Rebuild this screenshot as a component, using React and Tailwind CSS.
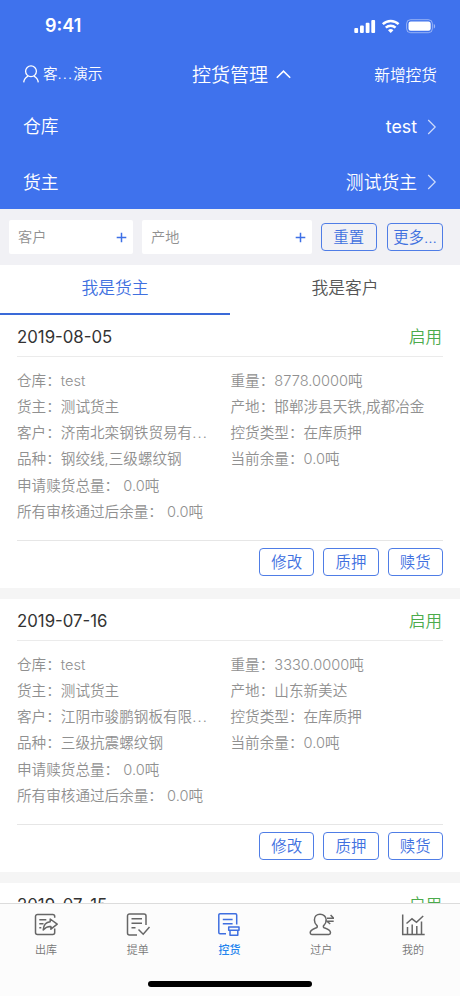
import React, { useState } from 'react'

const cards = [
  {
    id: 1,
    date: '2019-08-05',
    status: '启用',
    left: [
      ['仓库', 'test'],
      ['货主', '测试货主'],
      ['客户', '济南北栾钢铁贸易有限公司'],
      ['品种', '钢绞线,三级螺纹钢']
    ],
    right: [
      ['重量', '8778.0000吨'],
      ['产地', '邯郸涉县天铁,成都冶金'],
      ['控货类型', '在库质押'],
      ['当前余量', '0.0吨']
    ],
    applied: '0.0吨',
    remaining: '0.0吨'
  },
  {
    id: 2,
    date: '2019-07-16',
    status: '启用',
    left: [
      ['仓库', 'test'],
      ['货主', '测试货主'],
      ['客户', '江阴市骏鹏钢板有限公司'],
      ['品种', '三级抗震螺纹钢']
    ],
    right: [
      ['重量', '3330.0000吨'],
      ['产地', '山东新美达'],
      ['控货类型', '在库质押'],
      ['当前余量', '0.0吨']
    ],
    applied: '0.0吨',
    remaining: '0.0吨'
  },
  {
    id: 3,
    date: '2019-07-15',
    status: '启用'
  }
]

const StatusIcons = () => (
  <svg width="82" height="16" viewBox="0 0 82 16" fill="white">
    <rect x="0.3" y="10" width="3.8" height="5" rx="1" />
    <rect x="6" y="7.5" width="3.8" height="7.5" rx="1" />
    <rect x="11.7" y="4.7" width="3.8" height="10.3" rx="1" />
    <rect x="17.3" y="2" width="3.8" height="13" rx="1" />
    <g fill="none" stroke="white" strokeWidth="2.4">
      <path d="M28.8 6.2a11.3 11.3 0 0 1 15.8 0" />
      <path d="M31.8 9.7a7.2 7.2 0 0 1 9.8 0" />
    </g>
    <path d="M36.7 15l-2.7-2.8a4 4 0 0 1 5.4 0z" />
    <rect x="52.6" y="1.7" width="25.8" height="13" rx="4" fill="none" stroke="white" strokeOpacity=".45" />
    <rect x="54.5" y="3.6" width="22.2" height="9.2" rx="2.2" />
    <path d="M79.8 6v4.6c1.8-.7 1.8-3.9 0-4.6z" fillOpacity=".5" />
  </svg>
)

const Chevron = () => (
  <svg width="10" height="16" viewBox="0 0 10 16" fill="none" stroke="white" strokeOpacity=".75" strokeWidth="1.2">
    <path d="M1.2 1l7 7-7 7" />
  </svg>
)

const Plus = () => (
  <svg width="11" height="11" viewBox="0 0 11 11" stroke="#3e70e6" strokeWidth="1.5">
    <path d="M5.5 .7v9.6M.7 5.5h9.6" />
  </svg>
)

const OutIcon = () => (
  <>
    <path d="M20.7 4.8V3.5a2 2 0 0 0-2-2H3.5a2 2 0 0 0-2 2v16a2 2 0 0 0 2 2h15.2a2 2 0 0 0 2-2v-4" />
    <path d="M5.3 6.8h7M5.3 10.8h4.2M5.3 14.8h2" />
    <path d="M9.2 17c.4-5.4 3-7.9 7-8.2V6l7 5.2-6.3 5v-2.7c-3.7-.3-5.7 1.1-7.7 3.5z" strokeLinejoin="round" />
  </>
)

const BillIcon = () => (
  <>
    <path d="M20 12V3a2 2 0 0 0-2-2H3.5a2 2 0 0 0-2 2v17a2 2 0 0 0 2 2H11" />
    <path d="M5.5 5.8H16M5.5 10.3H16M5.5 14.8h4" />
    <path d="M12.5 16.5l4.7 4.7 6.3-7.2" />
  </>
)

const ControlIcon = () => (
  <>
    <path d="M19.7 11.5V2a1.2 1.2 0 0 0-1.2-1.2H3A1.2 1.2 0 0 0 1.8 2v17.5A1.2 1.2 0 0 0 3 20.7h6" />
    <path d="M5.8 6.4h9.8M5.8 10.8h9.8" />
    <path d="M11.7 14h10.3v3.2H11.7zM13 17.2h7.8v5H13z" strokeLinejoin="round" />
  </>
)

const TransferIcon = () => (
  <>
    <path d="M11 1.3c-3.3 0-5.6 2.4-5.6 5.6 0 2.3 1.2 4.5 2.6 5.7.6.7.3 1.8-.6 2.2-3 1.1-6.2 2-6.2 4.9 0 1 .6 1.7 1.6 1.7h17c1 0 1.7-.7 1.7-1.7 0-2.8-3.3-3.9-6.3-4.9-.9-.4-1.1-1.5-.5-2.2 1.5-1.4 2.5-3.4 2.5-5.7 0-3.2-2.6-5.6-6.2-5.6z" />
    <path d="M18 5.3h6.7L21.6 2M24.7 8.2H18l3.2 2.8" />
  </>
)

const ChartIcon = () => (
  <>
    <path d="M1.7 1.5v20h22" />
    <path d="M6.5 21v-7M11.2 21V11.5M15.8 21v-8M20.5 21V8.5" />
    <path d="M5.5 10.5L11 5.8l4.5 3.5 6.7-6.3" />
  </>
)

const navItems = [
  { key: 'out', label: '出库', icon: OutIcon },
  { key: 'bill', label: '提单', icon: BillIcon },
  { key: 'control', label: '控货', icon: ControlIcon },
  { key: 'transfer', label: '过户', icon: TransferIcon },
  { key: 'mine', label: '我的', icon: ChartIcon }
]

const OutlineButton = ({ children, onClick }) => (
  <button
    onClick={onClick}
    className="flex h-7 w-[55.5px] shrink-0 items-center justify-center whitespace-nowrap rounded-[4px] border border-[#4f7de6] pt-px text-[15.4px] leading-none text-[#4070df]"
  >
    {children}
  </button>
)

const MAX_CHARS = 9

const Field = ({ label, value }) => (
  <p className="whitespace-nowrap">
    {label}：{value.length > MAX_CHARS + 1 ? value.slice(0, MAX_CHARS) : value}
    {value.length > MAX_CHARS + 1 && <span className="tracking-[1.2px]">...</span>}
  </p>
)

const Card = ({ card }) => (
  <div className="mb-[11px] h-[273px] shrink-0 bg-white px-[17px]">
    <div className="flex h-[42px] items-center justify-between border-b border-[#ebebeb]">
      <span className="pt-[4px] text-[16.8px] font-normal text-[#333]">{card.date}</span>
      <span className="pt-[3px] pr-px text-[16.5px] text-[#4bab4b]">{card.status}</span>
    </div>
    {card.left && (
      <>
        <div className="h-[184px] border-b border-[#e6e6e6] pt-[10.5px] text-[14.6px] leading-[26.3px] text-[#909090]">
          <div className="flex">
            <div className="w-[213.5px]">
              {card.left.map(([label, value]) => <Field key={label} label={label} value={value} />)}
            </div>
            <div className="flex-1 whitespace-nowrap">
              {card.right.map(([label, value]) => <p key={label}>{label}：{value}</p>)}
            </div>
          </div>
          <p>申请赎货总量： {card.applied}</p>
          <p>所有审核通过后余量： {card.remaining}</p>
        </div>
        <div className="flex justify-end gap-[8.8px] pt-[7px]">
          <OutlineButton>修改</OutlineButton>
          <OutlineButton>质押</OutlineButton>
          <OutlineButton>赎货</OutlineButton>
        </div>
      </>
    )}
  </div>
)

const App = () => {
  const [tab, setTab] = useState('owner')
  const [activeNav, setActiveNav] = useState('control')

  return (
    <div className="flex h-[996px] w-[460px] flex-col overflow-hidden bg-[#f5f5f5] font-['Inter','Noto_Sans_CJK_SC',sans-serif] font-[350]">
      {/* Header */}
      <header className="h-[209px] shrink-0 bg-[#3f72ed] text-white">
        <div className="flex h-[51px] items-center justify-between pl-[45px] pr-[24px]">
          <span className="text-[18px] font-semibold">9:41</span>
          <StatusIcons />
        </div>
        <div className="grid h-[47px] grid-cols-[1fr_auto_1fr] items-center pl-[23px] pr-[23px]">
          <div className="flex items-center gap-[4px] text-[14.6px]">
            <svg width="16" height="18" viewBox="0 0 16 18" fill="none" stroke="white" strokeWidth="1.3">
              <circle cx="8" cy="6.3" r="5.4" />
              <path d="M.7 17.3c.4-3.2 1.8-5 4.4-6.2M15.3 17.3c-.4-3.2-1.8-5-4.4-6.2" />
            </svg>
            <span>客<span className="tracking-[1.1px]">...</span>演示</span>
          </div>
          <div className="flex items-center gap-[8px] pl-[23px] text-[19px]">
            <span className="pt-[3px]">控货管理</span>
            <svg width="15" height="10" viewBox="0 0 15 10" className="mb-[2px]" fill="none" stroke="white" strokeWidth="1.6">
              <path d="M.8 8.8l6.7-6.6 6.7 6.6" />
            </svg>
          </div>
          <span className="pt-[2px] text-right text-[15.7px]">新增控货</span>
        </div>
        <div className="flex h-[57px] items-center justify-between px-[23px] text-[17.8px]">
          <span className="pt-[2px]">仓库</span>
          <span className="flex items-center gap-[10px]"><span className="pt-[2px] font-normal">test</span> <Chevron /></span>
        </div>
        <div className="flex h-[54px] items-center justify-between px-[23px] text-[17.8px]">
          <span className="pt-[2px]">货主</span>
          <span className="flex items-center gap-[10px]"><span className="pt-[2px]">测试货主</span> <Chevron /></span>
        </div>
      </header>

      {/* Filters */}
      <div className="flex h-[56px] shrink-0 items-center bg-[#f1f1f5] pl-[9px] text-[14.2px] text-[#909090]">
        <div className="flex h-[34px] w-[124px] items-center justify-between rounded-[2px] bg-white pl-[9px] pr-[6px]">
          <span>客户</span>
          <Plus />
        </div>
        <div className="ml-[9px] mr-[9px] flex h-[34px] w-[170px] items-center justify-between rounded-[2px] bg-white pl-[9px] pr-[6px]">
          <span>产地</span>
          <Plus />
        </div>
        <div className="flex gap-[10.8px]">
          <OutlineButton>重置</OutlineButton>
          <OutlineButton>更多...</OutlineButton>
        </div>
      </div>

      {/* Tabs */}
      <div className="flex h-[50px] shrink-0 bg-white text-[16.8px]">
        <button
          onClick={() => setTab('owner')}
          className={`flex-1 border-b-2 pb-px ${tab === 'owner' ? 'border-[#3a6ad8] text-[#4070df]' : 'border-transparent text-[#555]'}`}
        >
          我是货主
        </button>
        <button
          onClick={() => setTab('customer')}
          className={`flex-1 border-b-2 pb-px ${tab === 'customer' ? 'border-[#3a6ad8] text-[#4070df]' : 'border-transparent text-[#555]'}`}
        >
          我是客户
        </button>
      </div>

      {/* List */}
      <main className="flex min-h-0 flex-1 flex-col overflow-hidden">
        {cards.map(card => <Card key={card.id} card={card} />)}
      </main>

      {/* Bottom navigation */}
      <nav className="flex h-[93px] shrink-0 flex-col items-center border-t border-[#dcdcdc] bg-[#fcfcfc]">
        <div className="flex h-[77px] w-full pr-px">
          {navItems.map(({ key, label, icon: Icon }) => (
            <button
              key={key}
              onClick={() => setActiveNav(key)}
              className={`flex flex-1 flex-col items-center pt-[9px] ${activeNav === key ? 'text-[#3f6fe0]' : 'text-[#666]'}`}
            >
              <svg width="25" height="24" viewBox="0 0 25 24" className="ml-px" fill="none" stroke="currentColor" strokeWidth="1.5">
                <Icon />
              </svg>
              <span className={`mt-[5px] text-[11px] leading-4 ${activeNav === key ? 'font-medium text-[#2484ee]' : 'text-[#777]'}`}>
                {label}
              </span>
            </button>
          ))}
        </div>
        <div className="h-[6px] w-[164px] rounded-full bg-black" />
      </nav>
    </div>
  )
}

export default App
